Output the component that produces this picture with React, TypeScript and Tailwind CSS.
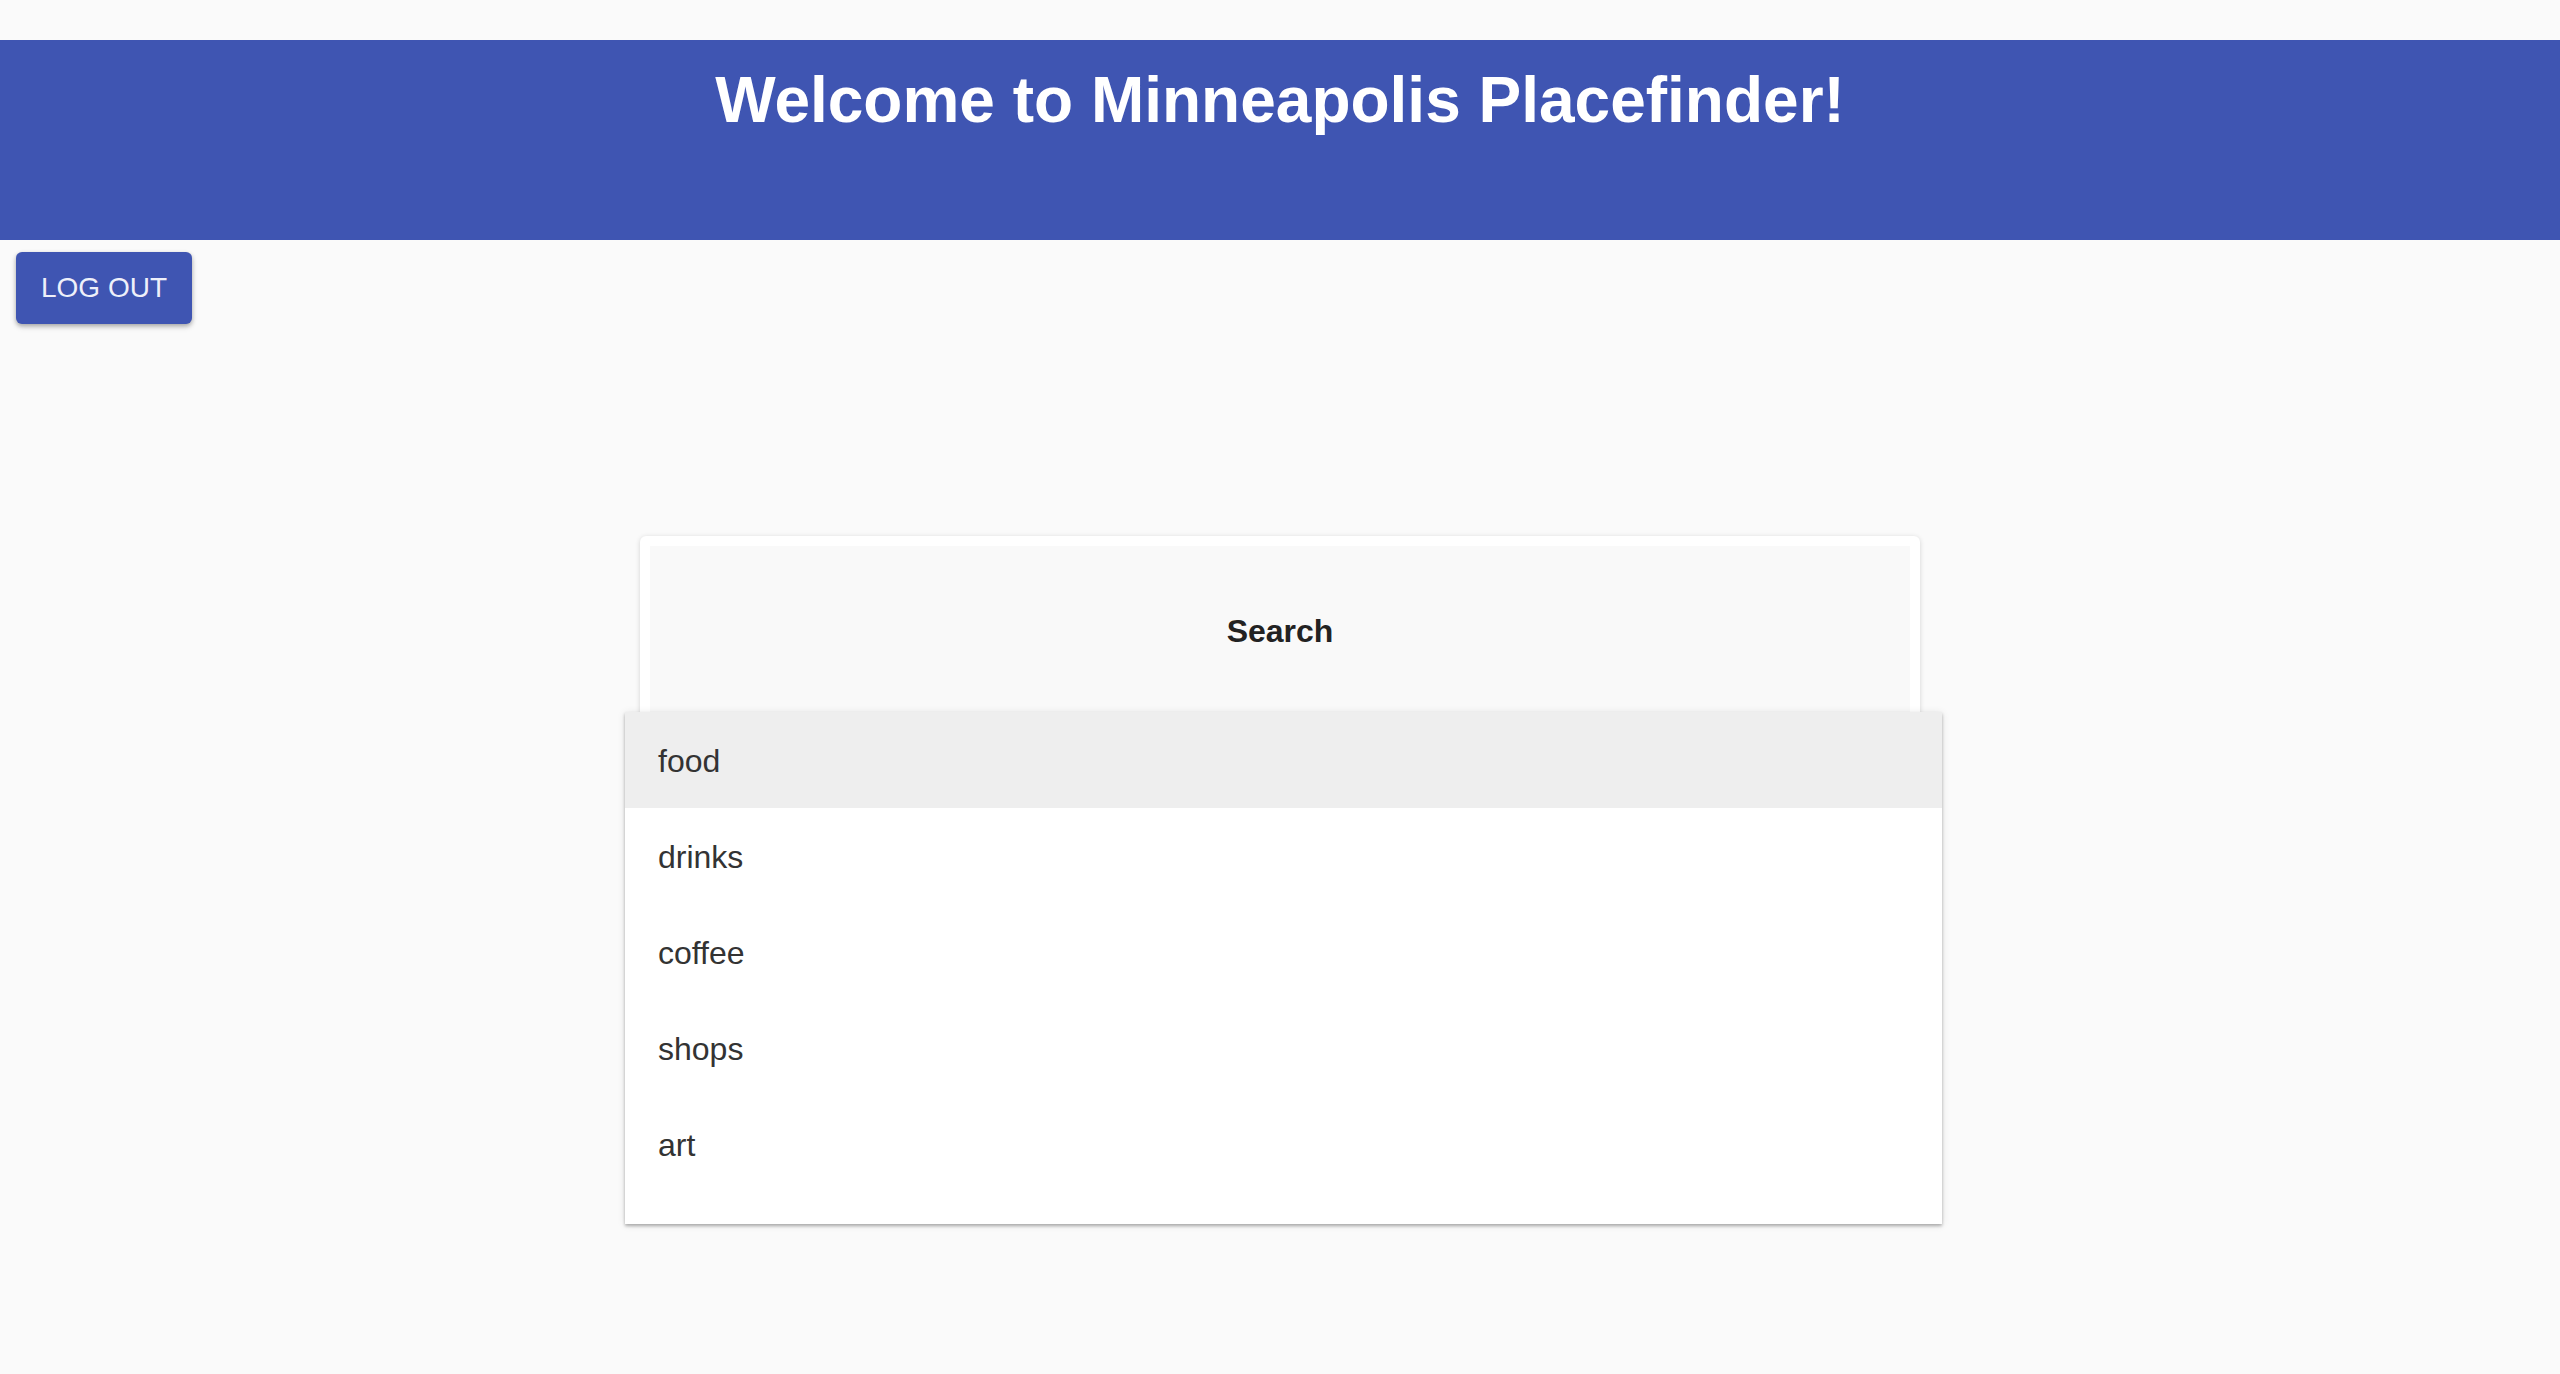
import React from "react";

const items = ["food", "drinks", "coffee", "shops", "art"];

export default function App() {
  return (
    <div
      className="min-h-screen bg-[#fafafa] pt-[40px]"
      style={{ fontFamily: '"Liberation Sans", Arial, sans-serif' }}
    >
      <header className="h-[200px] bg-[#3f55b2] pt-[28px]">
        <h1 className="text-center text-[64px] leading-[64px] font-bold text-white">
          Welcome to Minneapolis Placefinder!
        </h1>
      </header>
      <div className="pl-4 pt-3">
        <button className="flex h-[72px] w-[176px] items-center justify-center rounded-[6px] bg-[#3f55b2] text-[28px] leading-none text-[#eef0fa] shadow-[0_2px_4px_rgba(0,0,0,0.25),0_3px_6px_rgba(0,0,0,0.12)]">
          LOG OUT
        </button>
      </div>
      <div className="mt-[212px] flex justify-center">
        <div className="relative w-[1280px] rounded-[6px] bg-white p-[10px] shadow-[0_1px_5px_rgba(0,0,0,0.16)]">
          <div className="h-[300px] bg-[#f9f9f9] pt-[69px] text-center">
            <div className="text-[32px] leading-[32px] font-bold text-[#222]">Search</div>
          </div>
          <div className="absolute left-[-15px] top-[176px] w-[1317px] bg-white pb-[32px] shadow-[0_2px_3px_rgba(0,0,0,0.28),0_1px_8px_rgba(0,0,0,0.1)]">
            {items.map((it, i) => (
              <div
                key={it}
                className={
                  "h-[96px] pl-[33px] pt-[2px] text-[32px] leading-[94px] text-[#333] " +
                  (i === 0 ? "bg-[#eeeeee]" : "bg-white")
                }
              >
                {it}
              </div>
            ))}
          </div>
        </div>
      </div>
    </div>
  );
}
